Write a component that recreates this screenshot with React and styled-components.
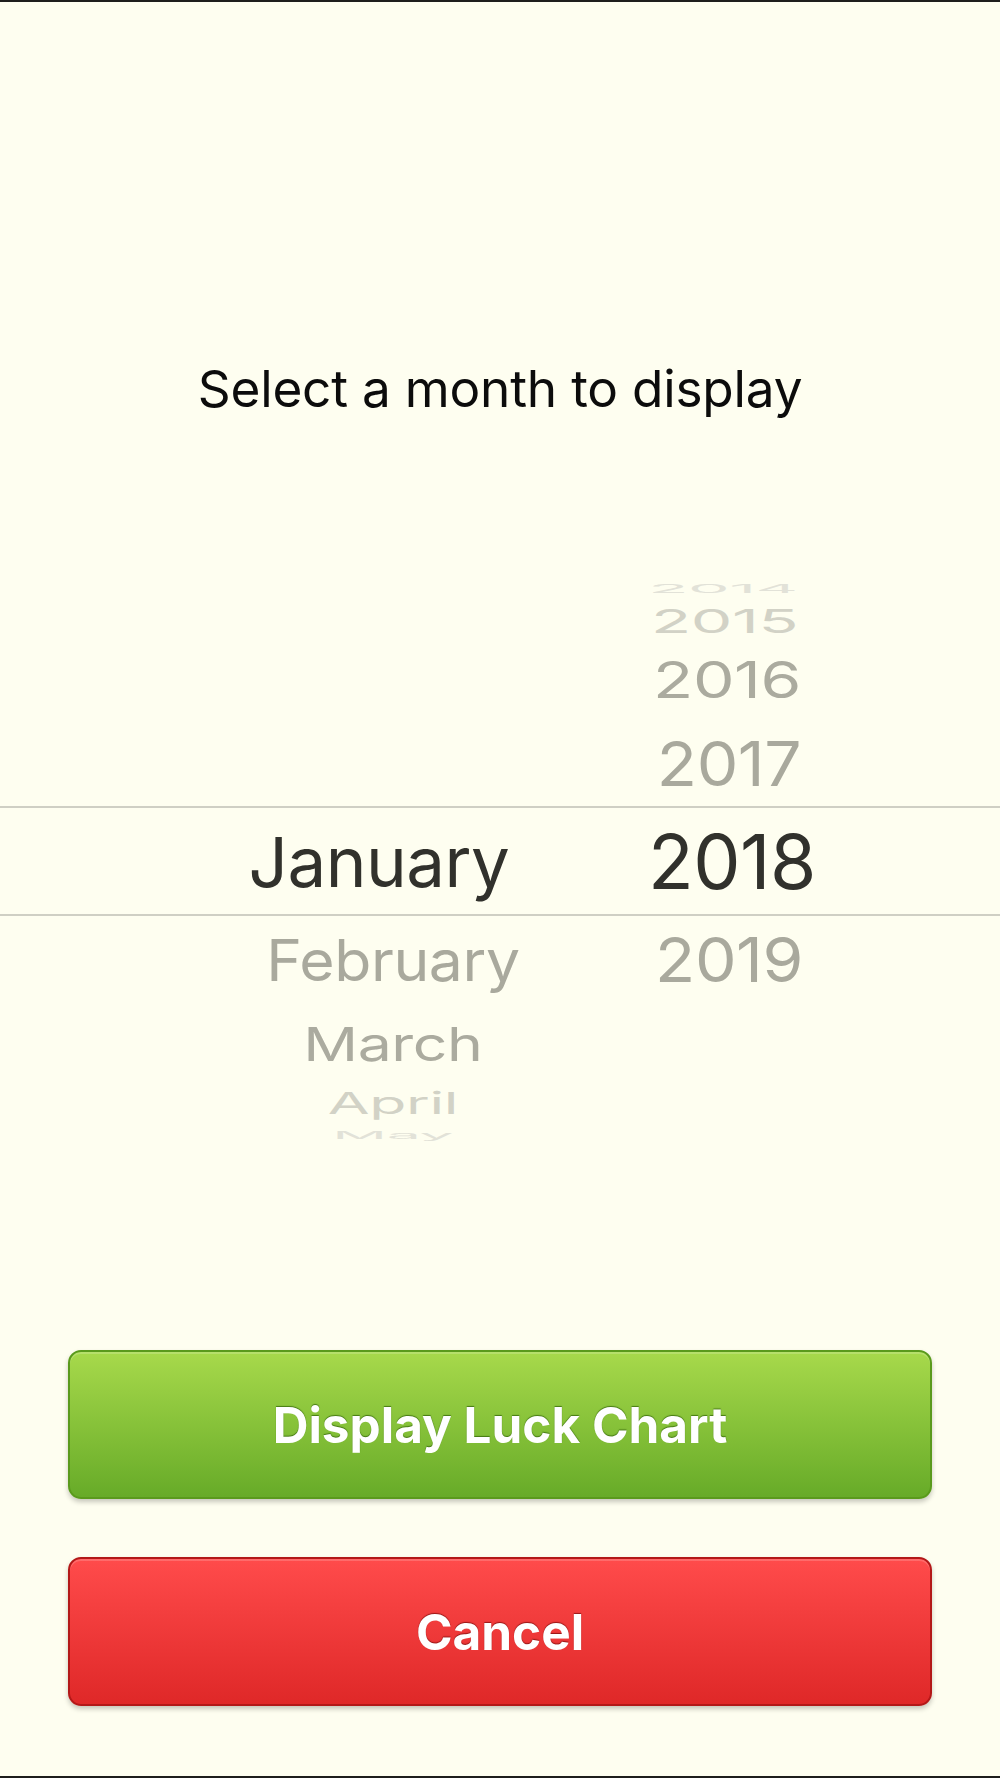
import React from "react";
import styled, { createGlobalStyle } from "styled-components";

const months = ["January", "February", "March", "April", "May"];
const years = ["2014", "2015", "2016", "2017", "2018", "2019"];

// rows on the wheel: distance from the centre line and how squashed they get
const STEP = 20;
const OFFSETS = [0, 98, 182, 241, 273];
const DRIFT = [0, -1, -3, -5, -7];
const shades = ["#31312c", "#a9a99d", "#abab9f", "#d2d2c6", "#e2e2d8"];

const wheelTransform = (offset, shift = 0, drift = false) => {
  const dist = Math.min(Math.abs(offset), OFFSETS.length - 1);
  const angle = (dist * STEP * Math.PI) / 180;
  const depth = offset === 0 ? 1 : 0.88;
  const dy = Math.sign(offset) * OFFSETS[dist];
  const dx = offset === 0 ? shift : drift ? DRIFT[dist] : 0;
  const sy = Math.max(Math.cos(angle), 0.14) * depth;
  return {
    transform: `translate(${dx}px, ${dy}px) scale(${depth}, ${sy})`,
    color: shades[dist],
  };
};

const App = () => {
  const selectedMonth = 0;
  const selectedYear = 4;

  return (
    <>
      <GlobalStyle />
      <Screen>
        <Title>Select a month to display</Title>

        <Picker>
          <Wheel size={69}>
            {months.map((m, i) => (
              <WheelItem key={m} style={wheelTransform(i - selectedMonth, -14)}>
                {m}
              </WheelItem>
            ))}
          </Wheel>
          <Wheel size={75}>
            {years.map((y, i) => (
              <WheelItem key={y} style={wheelTransform(i - selectedYear, 2, true)}>
                {y}
              </WheelItem>
            ))}
          </Wheel>
        </Picker>

        <Actions>
          <Button tone="green">Display Luck Chart</Button>
          <Button tone="red">Cancel</Button>
        </Actions>
      </Screen>
    </>
  );
};

const GlobalStyle = createGlobalStyle`
  html, body {
    margin: 0;
    padding: 0;
    background: #fefef0;
  }
  body {
    font-family: Inter, "Liberation Sans", Arial, sans-serif;
  }
  * {
    box-sizing: border-box;
  }
`;

const Screen = styled.div`
  width: 1000px;
  height: 1778px;
  display: flex;
  flex-direction: column;
  background: #fefef0;
  border-top: 2px solid #1e1e1c;
  border-bottom: 2px solid #1e1e1c;
  overflow: hidden;
`;

const Title = styled.h1`
  margin: 0;
  padding-top: 356px;
  text-align: center;
  font-size: 51.3px;
  line-height: 60px;
  font-weight: 400;
  color: #0c0c0c;
  letter-spacing: -0.2px;
`;

const Picker = styled.div`
  position: relative;
  margin-top: 164px;
  height: 560px;
  display: grid;
  grid-template-columns: 386px 288px;
  padding-left: 200px;
  overflow: hidden;

  &::before,
  &::after {
    content: "";
    position: absolute;
    left: 0;
    right: 0;
    height: 2px;
    background: #cfcfc4;
  }
  &::before {
    top: 224px;
  }
  &::after {
    top: 332px;
  }
`;

const Wheel = styled.div`
  display: grid;
  align-items: center;
  justify-items: center;
  font-size: ${(p) => p.size}px;
`;

const WheelItem = styled.div`
  grid-area: 1 / 1;
  line-height: 86px;
  white-space: nowrap;
  letter-spacing: -0.5px;
`;

const Actions = styled.div`
  margin-top: auto;
  padding: 0 68px 70px;
  display: flex;
  flex-direction: column;
  gap: 58px;
`;

const tones = {
  green: {
    top: "#a7d94b",
    bottom: "#67ab28",
    border: "#5a9a1c",
    glow: "rgba(45, 95, 5, 0.75)",
  },
  red: {
    top: "#ff4b4b",
    bottom: "#df2828",
    border: "#b31818",
    glow: "rgba(120, 10, 10, 0.75)",
  },
};

const Button = styled.button`
  height: 149px;
  width: 100%;
  border-radius: 13px;
  border: 2px solid ${(p) => tones[p.tone].border};
  background: linear-gradient(
    ${(p) => tones[p.tone].top},
    ${(p) => tones[p.tone].bottom}
  );
  box-shadow: inset 0 2px 0 rgba(255, 255, 255, 0.18),
    0 3px 5px rgba(0, 0, 0, 0.22);
  color: #ffffff;
  font-family: Inter, "Liberation Sans", Arial, sans-serif;
  font-size: 49.5px;
  font-weight: 700;
  text-shadow: 0 -1px 1px ${(p) => tones[p.tone].glow};
  cursor: pointer;
`;

export default App;
